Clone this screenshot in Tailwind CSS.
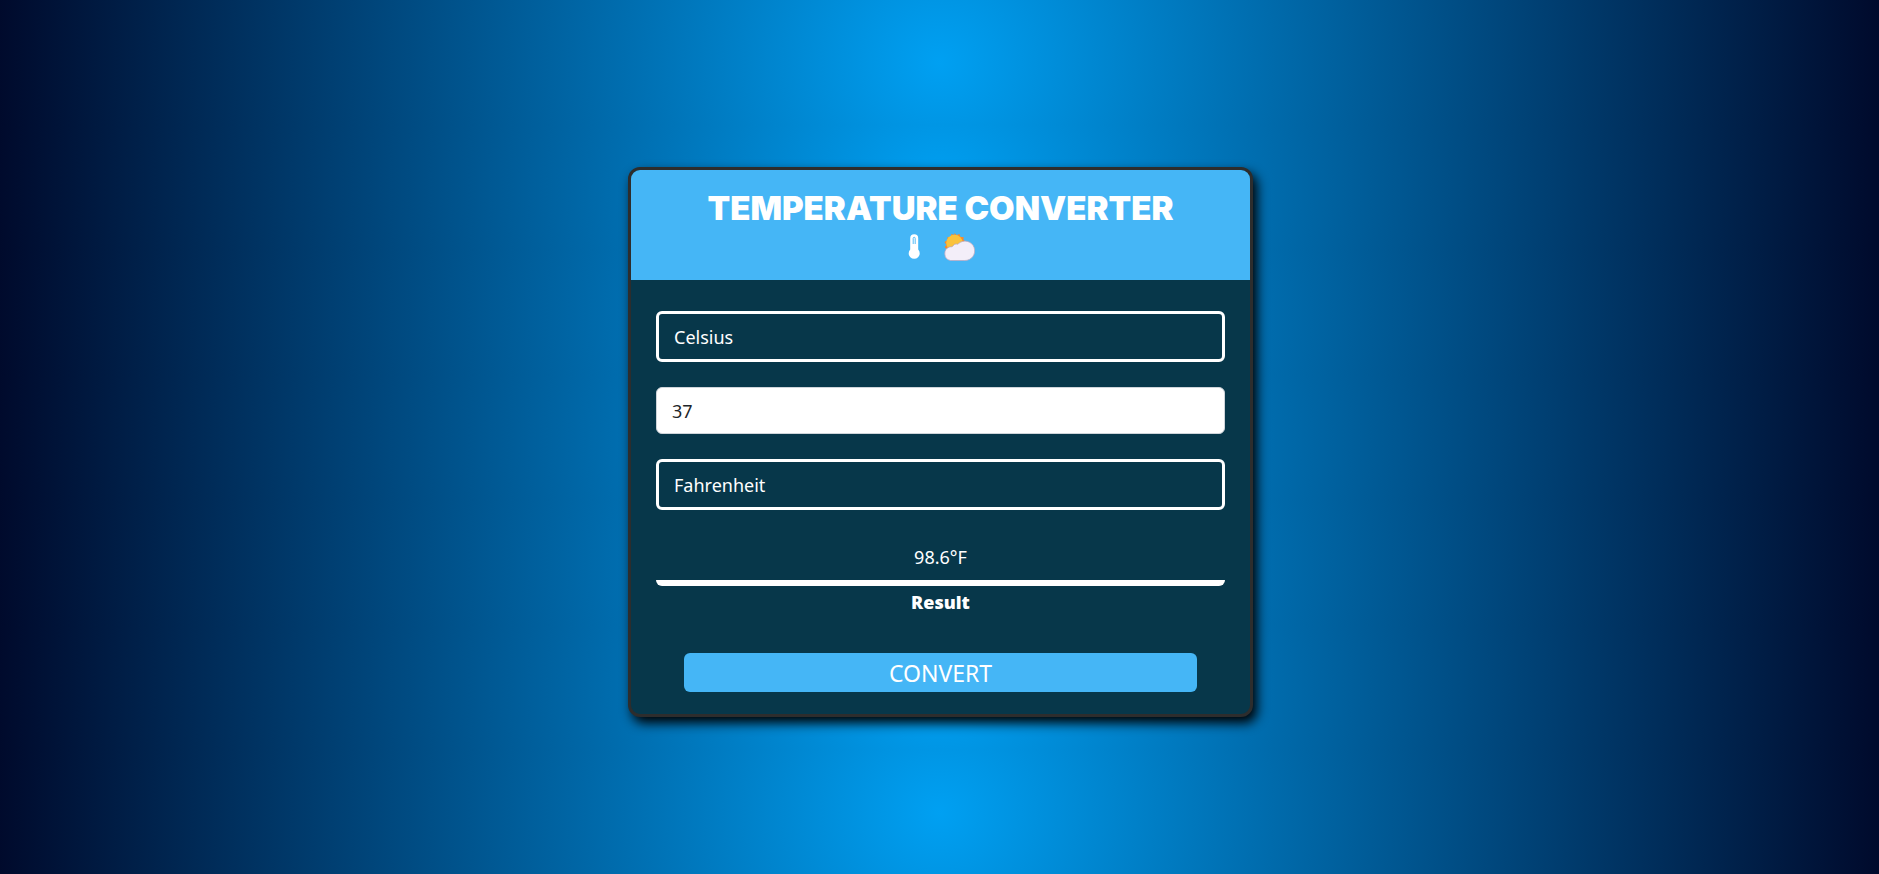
<!DOCTYPE html>
<html lang="en">
<head>
<meta charset="utf-8">
<title>Temperature Converter</title>
<script src="https://cdn.jsdelivr.net/npm/@tailwindcss/browser@4"></script>
</head>
<body class="min-h-screen flex items-center justify-center pt-[10px] pl-[2px] bg-[radial-gradient(circle,#00a0f2,#000a2c)] bg-[length:100%_125px] bg-repeat-y font-['Noto_Sans',sans-serif] text-white">
<main class="w-full max-w-[625px] border-3 border-[#2d2d2d] rounded-xl overflow-hidden bg-[#07374a] shadow-[4px_6px_12px_#000]">
  <header class="bg-[#45b6f6] pt-5 pb-[13px] text-center">
    <h1 class="font-['Inter','Liberation_Sans',sans-serif] font-black text-[33px] leading-9">TEMPERATURE CONVERTER</h1>
    <div class="flex justify-center items-center gap-[21px] h-[41px]">
      <svg class="w-4 h-7" viewBox="0 0 16 28" fill="none"><path d="M4.200 16.500V5.200a4 4 0 0 1 8 0v11.300a5.500 5.500 0 1 1-8 0Z" fill="#fff"/><path d="M7.200 11V5.300a1 1 0 0 1 2 0V11" stroke="#45b6f6" stroke-width=".9"/></svg>
      <svg class="w-8 h-7" viewBox="0 0 32 28"><path d="m11.500 0 2 2 3-1 1 3 3 0 0 3 3 2-1 3 1 3-2 2-17 0-3-3 2-2-2-3 3-2 0-3 3 0 1-3 3 1z" fill="#f9882b"/><circle cx="11.500" cy="10" r="8.300" fill="#fac23c"/><path d="M7.500 27.500a7 7 0 0 1-1-13.500c1.500-.4 2 0 3-.6s1.500-2.400 3.500-2.400c1.200 0 1.800.6 2.500-.4a9.700 9.700 0 1 1 6.200 16.900z" fill="#f3eef9" stroke="#b9a9c2" stroke-width=".8"/></svg>
    </div>
  </header>
  <form class="px-[25px] pt-[31px] pb-[22px] text-lg">
    <select aria-label="Convert from" class="appearance-none block w-full h-[51px] border-3 border-white rounded-md px-[15px] bg-transparent"><option>Celsius</option></select>
    <input aria-label="Temperature" value="37" class="block w-full h-[47px] mt-[25px] border border-[#ced4da] rounded-md px-[15px] bg-white text-[#212529]">
    <select aria-label="Convert to" class="appearance-none block w-full h-[51px] mt-[25px] border-3 border-white rounded-md px-[15px] bg-transparent"><option>Fahrenheit</option></select>
    <input id="result" readonly value="98.6°F" class="block w-full h-[52px] mt-6 border-b-6 border-white rounded-md text-center bg-transparent">
    <label for="result" class="block text-center font-black leading-8">Result</label>
    <button type="button" class="block w-[513px] max-w-full h-[39px] mt-[35px] mx-auto pt-[2px] rounded-md bg-[#45b6f6] text-[23px]">CONVERT</button>
  </form>
</main>
</body>
</html>
